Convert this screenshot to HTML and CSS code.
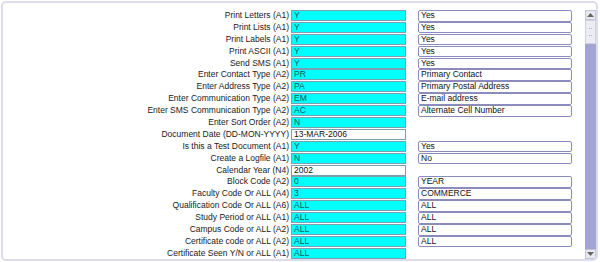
FILE: index.html
```html
<!DOCTYPE html>
<html>
<head>
<meta charset="utf-8">
<link rel="stylesheet" href="styles.css">
</head>
<body>
<div class="frame">
  <div class="content">
    <div class="grid">
      <div class="lbl">Print Letters (A1)</div><div class="inp">Y</div><div class="desc">Yes</div>
      <div class="lbl">Print Lists (A1)</div><div class="inp">Y</div><div class="desc">Yes</div>
      <div class="lbl">Print Labels (A1)</div><div class="inp">Y</div><div class="desc">Yes</div>
      <div class="lbl">Print ASCII (A1)</div><div class="inp">Y</div><div class="desc">Yes</div>
      <div class="lbl">Send SMS (A1)</div><div class="inp">Y</div><div class="desc">Yes</div>
      <div class="lbl">Enter Contact Type (A2)</div><div class="inp">PR</div><div class="desc">Primary Contact</div>
      <div class="lbl">Enter Address Type (A2)</div><div class="inp">PA</div><div class="desc">Primary Postal Address</div>
      <div class="lbl">Enter Communication Type (A2)</div><div class="inp">EM</div><div class="desc">E-mail address</div>
      <div class="lbl">Enter SMS Communication Type (A2)</div><div class="inp">AC</div><div class="desc">Alternate Cell Number</div>
      <div class="lbl">Enter Sort Order (A2)</div><div class="inp">N</div><div class="none"></div>
      <div class="lbl">Document Date (DD-MON-YYYY)</div><div class="inp white">13-MAR-2006</div><div class="none"></div>
      <div class="lbl">Is this a Test Document (A1)</div><div class="inp">Y</div><div class="desc">Yes</div>
      <div class="lbl">Create a Logfile (A1)</div><div class="inp">N</div><div class="desc">No</div>
      <div class="lbl">Calendar Year (N4)</div><div class="inp white">2002</div><div class="none"></div>
      <div class="lbl">Block Code (A2)</div><div class="inp">0</div><div class="desc">YEAR</div>
      <div class="lbl">Faculty Code Or ALL (A4)</div><div class="inp">3</div><div class="desc">COMMERCE</div>
      <div class="lbl">Qualification Code Or ALL (A6)</div><div class="inp">ALL</div><div class="desc">ALL</div>
      <div class="lbl">Study Period or ALL (A1)</div><div class="inp">ALL</div><div class="desc">ALL</div>
      <div class="lbl">Campus Code or ALL (A2)</div><div class="inp">ALL</div><div class="desc">ALL</div>
      <div class="lbl">Certificate code or ALL (A2)</div><div class="inp">ALL</div><div class="desc">ALL</div>
      <div class="lbl">Certificate Seen Y/N or ALL (A1)</div><div class="inp">ALL</div><div class="none"></div>
    </div>
  </div>
  <div class="scrollbar">
    <div class="sbtn"><svg width="7" height="4" viewBox="0 0 7 4"><path d="M0 4 L3.5 0 L7 4Z" fill="#666"/></svg></div>
    <div class="thumb"><span class="grip"></span></div>
    <div class="track"></div>
    <div class="sbtn"><svg width="7" height="4" viewBox="0 0 7 4"><path d="M0 0 L3.5 4 L7 0Z" fill="#666"/></svg></div>
  </div>
</div>
</body>
</html>
```
FILE: styles.css
```css
html, body {
  margin: 0;
  padding: 0;
  background: #ffffff;
}
body {
  font-family: "Liberation Sans", Arial, sans-serif;
  font-size: 8.5px;
  color: #000;
}
.frame {
  margin: 1px 0 0 1px;
  width: 597px;
  height: 260px;
  box-sizing: border-box;
  border: 2px solid #dcdcee;
  border-radius: 5px;
  display: flex;
  overflow: hidden;
}
.content {
  flex: 1;
  overflow: hidden;
  padding-top: 7px;
}
.grid {
  display: grid;
  grid-template-columns: 288px 115px 166px;
  grid-auto-rows: 11.9px;
}
.lbl {
  text-align: right;
  padding-right: 2px;
  line-height: 11.9px;
  white-space: nowrap;
  color: #1a1a1a;
}
.inp {
  height: 11px;
  box-sizing: border-box;
  background: #00ffff;
  border: 1px solid #7aa0b4;
  line-height: 9px;
  padding-left: 2px;
  color: #005858;
  white-space: nowrap;
}
.inp.white {
  background: #fff;
  color: #111;
}
.desc {
  margin-left: 12px;
  width: 154px;
  height: 11.5px;
  box-sizing: border-box;
  border: 1px solid #8c8cbc;
  border-radius: 2px;
  line-height: 9.5px;
  padding-left: 2px;
  color: #111;
  white-space: nowrap;
}
.scrollbar {
  width: 11px;
  margin-top: 7px;
  margin-right: 0;
  display: flex;
  flex-direction: column;
}
.sbtn {
  height: 10px;
  background: #e8e8f0;
  border: 1px solid #c4c4d8;
  box-sizing: border-box;
  display: flex;
  align-items: center;
  justify-content: center;
}
.thumb {
  height: 24px;
  background: #ececf4;
  border: 1px solid #d0d0e0;
  box-sizing: border-box;
  display: flex;
  align-items: center;
  justify-content: center;
}
.grip {
  width: 3px;
  height: 6px;
  border-top: 1px dotted #b0b0c8;
  border-bottom: 1px dotted #b0b0c8;
}
.track {
  flex: 1;
  background: #a4a4d2;
}
```
